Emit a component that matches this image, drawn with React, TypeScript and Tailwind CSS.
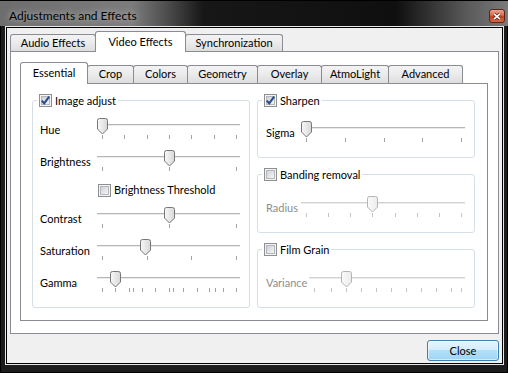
import React, { useId } from 'react';

type TabDef = { label: string; cls: string };

const outerTabs: TabDef[] = [
  { label: 'Audio Effects', cls: 'w-[86px]' },
  { label: 'Video Effects', cls: 'w-[91px]' },
  { label: 'Synchronization', cls: 'w-[98px]' },
];

const innerTabs: TabDef[] = [
  { label: 'Essential', cls: 'w-[68px]' },
  { label: 'Crop', cls: 'w-[47px]' },
  { label: 'Colors', cls: 'w-[55px]' },
  { label: 'Geometry', cls: 'w-[71px]' },
  { label: 'Overlay', cls: 'w-[65px]' },
  { label: 'AtmoLight', cls: 'w-[68px]' },
  { label: 'Advanced', cls: 'w-[75px]' },
];

const even = (n: number, from: number, to: number) =>
  Array.from({ length: n }, (_, i) => from + ((to - from) * i) / (n - 1));

const CheckBox = ({ checked }: { checked?: boolean }) => {
  const id = useId();
  return (
    <svg width="13" height="13" viewBox="0 0 13 13" className="shrink-0 block">
      <defs>
        <linearGradient id={id} x1="0" y1="0" x2="1" y2="1">
          <stop offset="0" stopColor="#cbcfd5" />
          <stop offset="1" stopColor="#f7f7f7" />
        </linearGradient>
      </defs>
      <rect x="0.5" y="0.5" width="12" height="12" fill="#f4f4f4" stroke="#8e8f8f" />
      <rect x="2.5" y="2.5" width="8" height="8" fill={`url(#${id})`} stroke="#b3b7bd" />
      {checked && (
        <path d="M2.8 6.6 L5.2 9.4 L10.2 2.6" stroke="#2a4b8d" strokeWidth="2.1" fill="none" />
      )}
    </svg>
  );
};

type SliderProps = { w: number; value: number; ticks: number[]; disabled?: boolean };

const Slider = ({ w, value, ticks, disabled }: SliderProps) => {
  const id = useId();
  const cx = Math.round(value) + 0.5;
  const l = cx - 5;
  const r = cx + 5;
  const d = `M${l + 2} 0.5 H${r - 2} Q${r} 0.5 ${r} 2.5 V11 L${cx} 16 L${l} 11 V2.5 Q${l} 0.5 ${l + 2} 0.5 Z`;
  return (
    <svg width={w} height={24} className="shrink-0 block">
      <defs>
        <linearGradient id={id} x1="0" y1="0" x2="1" y2="0">
          <stop offset="0" stopColor={disabled ? '#fafafa' : '#f8f8f8'} />
          <stop offset="1" stopColor={disabled ? '#ececec' : '#d8d8d8'} />
        </linearGradient>
      </defs>
      <line x1={0} y1={6.5} x2={w} y2={6.5} stroke={disabled ? '#d2d2d2' : '#b6b6b6'} />
      <line x1={0} y1={7.5} x2={w} y2={7.5} stroke="#ebebeb" />
      {ticks.map((t, i) => (
        <line
          key={i}
          x1={Math.round(t) + 0.5}
          y1={17}
          x2={Math.round(t) + 0.5}
          y2={21}
          stroke={disabled ? '#c4c4c4' : '#a3a3a3'}
        />
      ))}
      <path d={d} fill={`url(#${id})`} stroke={disabled ? '#b2b5b8' : '#767676'} />
    </svg>
  );
};

const SliderRow = ({
  label,
  labelCls,
  disabled,
  ...slider
}: SliderProps & { label: string; labelCls: string }) => (
  <div className="flex items-center">
    <span className={`${labelCls} shrink-0 ${disabled ? 'text-[#8d8d8d]' : 'text-black'}`}>{label}</span>
    <Slider {...slider} disabled={disabled} />
  </div>
);

const Legend = ({ label, checked }: { label: string; checked?: boolean }) => (
  <legend className="ml-[4px] px-[2px]">
    <span className="flex items-center gap-[3px] h-[15px] leading-[15px]">
      <CheckBox checked={checked} />
      <span>{label}</span>
    </span>
  </legend>
);

const Tab = ({ tab, selected, first, outer }: { tab: TabDef; selected: boolean; first: boolean; outer?: boolean }) => (
  <div
    className={[
      'flex items-center justify-center border border-b-0 border-[#898c95] rounded-t-[3px] whitespace-nowrap',
      tab.cls,
      first ? '' : '-ml-px',
      selected
        ? `relative z-10 -mb-px bg-white ${outer ? 'h-[21px]' : 'h-[22px]'}`
        : `bg-[linear-gradient(#f3f3f3,#ebebeb_50%,#dddddd)] ${outer ? 'h-[17px]' : 'h-[18px]'}`,
    ].join(' ')}
  >
    {tab.label}
  </div>
);

export default function App() {
  return (
    <div className="w-[508px] h-[373px] flex flex-col bg-[#1c1c1c] border border-black font-['Lato','Liberation_Sans',sans-serif] text-[11px] text-black">
      {/* title bar */}
      <div className="h-[25px] flex justify-between pl-[9px] pr-[3px] -mx-px bg-[linear-gradient(90deg,#6d6d6d_0%,#7c7c7c_26%,#4c4c4c_33%,#171717_40%,#0f0f0f_78%,#5a5a5a_92%,#7a7a7a_100%)]">
        <span className="mt-[7px] text-[12px] leading-[15px] [text-shadow:0_0_6px_rgba(255,255,255,0.7)]">Adjustments and Effects</span>
        <div className="mt-[8px] w-[16px] h-[14px] rounded-[3px] border border-[#5a2418] bg-[linear-gradient(#eba58f,#d9694c_45%,#c2411f_55%,#d56a48)] flex items-center justify-center">
          <svg width="8" height="7" viewBox="0 0 8 7">
            <path d="M1 0.8 L7 6.2 M7 0.8 L1 6.2" stroke="#5a2418" strokeWidth="3" />
            <path d="M1 0.8 L7 6.2 M7 0.8 L1 6.2" stroke="#fff" strokeWidth="1.6" />
          </svg>
        </div>
      </div>

      {/* frame */}
      <div className="ml-[4px] mr-[3px] border border-[#e8e8e8]">
        <div className="border border-black h-[337px]">
          <div className="h-[335px] bg-[#f0f0f0] flex flex-col pt-[3px] px-[3px]">
            {/* outer tabs */}
            <div className="flex items-end h-[20px]">
              {outerTabs.map((t, i) => (
                <Tab key={t.label} tab={t} selected={i === 1} first={i === 0} outer />
              ))}
            </div>
            <div className="h-[283px] border border-[#898c95] bg-white pt-[10px] pl-[9px] pr-[10px] pb-[12px] flex flex-col">
              {/* inner tabs */}
              <div className="flex items-end h-[21px]">
                {innerTabs.map((t, i) => (
                  <Tab key={t.label} tab={t} selected={i === 0} first={i === 0} />
                ))}
              </div>
              <div className="h-[238px] border border-[#898c95] bg-white flex gap-[7px] pl-[11px] pt-[9px]">
                {/* left column */}
                <fieldset className="w-[218px] h-[215px] border border-[#d5dfe5] rounded-[3px]">
                  <Legend label="Image adjust" checked />
                  <div className="flex flex-col gap-[8px] pt-[10px] pl-[7px]">
                    <SliderRow label="Hue" labelCls="w-[57px]" w={143} value={5} ticks={even(7, 5, 139)} />
                    <SliderRow label="Brightness" labelCls="w-[57px]" w={143} value={72} ticks={even(3, 5, 139)} />
                    <div className="h-[17px] flex items-center gap-[3px] pl-[58px]">
                      <CheckBox />
                      <span>Brightness Threshold</span>
                    </div>
                    <SliderRow label="Contrast" labelCls="w-[57px]" w={143} value={72} ticks={even(3, 5, 139)} />
                    <SliderRow label="Saturation" labelCls="w-[57px]" w={143} value={48} ticks={even(4, 5, 139)} />
                    <SliderRow
                      label="Gamma"
                      labelCls="w-[57px]"
                      w={143}
                      value={18}
                      ticks={[5, 18, 32, 36, 45, 58, 72, 76, 86, 100, 112, 118, 126, 139]}
                    />
                  </div>
                </fieldset>

                {/* right column */}
                <div className="flex flex-col gap-[9px]">
                  <fieldset className="w-[218px] h-[65px] border border-[#d5dfe5] rounded-[3px]">
                    <Legend label="Sharpen" checked />
                    <div className="pt-[13px] pl-[8px]">
                      <SliderRow label="Sigma" labelCls="w-[35px]" w={164} value={5} ticks={even(5, 5, 160)} />
                    </div>
                  </fieldset>
                  <fieldset className="w-[218px] h-[66px] border border-[#d5dfe5] rounded-[3px]">
                    <Legend label="Banding removal" />
                    <div className="pt-[14px] pl-[8px]">
                      <SliderRow label="Radius" labelCls="w-[35px]" w={164} value={71} ticks={even(8, 5, 160)} disabled />
                    </div>
                  </fieldset>
                  <fieldset className="w-[218px] h-[66px] border border-[#d5dfe5] rounded-[3px]">
                    <Legend label="Film Grain" />
                    <div className="pt-[14px] pl-[8px]">
                      <SliderRow
                        label="Variance"
                        labelCls="w-[43px]"
                        w={156}
                        value={37}
                        ticks={[5, 22, 37, 52, 67, 82, 97, 112, 127, 142, 152]}
                        disabled
                      />
                    </div>
                  </fieldset>
                </div>
              </div>
            </div>

            {/* buttons */}
            <div className="flex justify-end mt-[6px]">
              <button className="w-[72px] h-[21px] rounded-[3px] border border-[#3c7fb1] bg-[linear-gradient(#e5f4fc_0%,#d3eefc_45%,#b3e0f9_50%,#9fd4f3_100%)] shadow-[inset_0_0_0_1px_rgba(255,255,255,0.55)] leading-[19px]">
                Close
              </button>
            </div>
          </div>
        </div>
      </div>
    </div>
  );
}
